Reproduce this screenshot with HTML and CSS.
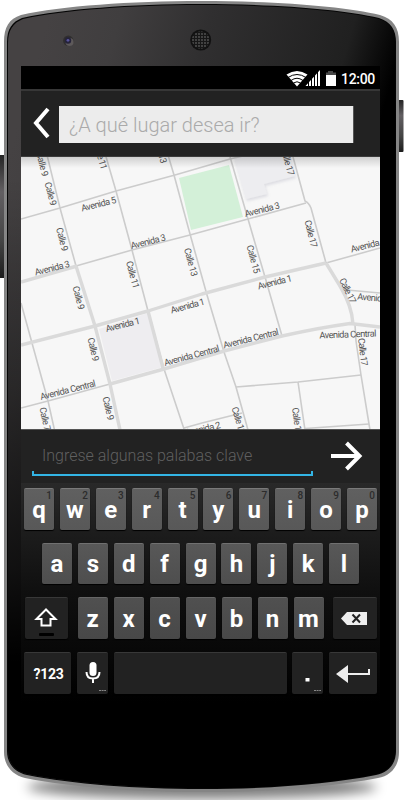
FILE: index.html
```
<!DOCTYPE html>
<html lang="es">
<head>
<meta charset="utf-8">
<title>¿A qué lugar desea ir?</title>
<link rel="stylesheet" href="styles.css">
</head>
<body>
<div class="phone">
  <svg class="phone-body" viewBox="0 0 404 800" aria-hidden="true">
    <defs>
      <linearGradient id="face" gradientUnits="userSpaceOnUse" x1="30" y1="80" x2="365" y2="175">
        <stop offset="0" stop-color="#454243"/><stop offset=".2" stop-color="#403e3f"/><stop offset=".45" stop-color="#302f30"/><stop offset=".85" stop-color="#202020"/><stop offset="1" stop-color="#000"/>
      </linearGradient>
      <linearGradient id="fade" x1="0" y1="0" x2="0" y2="1">
        <stop offset=".22" stop-color="#000" stop-opacity="0"/><stop offset=".5" stop-color="#000" stop-opacity=".38"/><stop offset=".72" stop-color="#000" stop-opacity=".7"/><stop offset=".84" stop-color="#000"/>
      </linearGradient>
      <linearGradient id="side" x1="0" y1="0" x2="0" y2="1">
        <stop offset="0" stop-color="#242424"/><stop offset=".3" stop-color="#625f62"/><stop offset=".7" stop-color="#444"/><stop offset="1" stop-color="#1c1c1c"/>
      </linearGradient>
      <filter id="soft" x="-20%" y="-80%" width="140%" height="260%"><feGaussianBlur stdDeviation="6"/></filter>
      <pattern id="grille" width="3" height="3" patternUnits="userSpaceOnUse"><rect width="3" height="3" fill="#171717"/><circle cx="1" cy="1" r=".9" fill="#555"/></pattern>
    </defs>
    <ellipse cx="202" cy="787" rx="175" ry="12" fill="#000" opacity=".5" filter="url(#soft)"/>
    <rect x="-2" y="155" width="7" height="123" rx="1" fill="url(#side)"/>
    <rect x="398" y="100" width="5.5" height="52" rx="1" fill="url(#side)"/>
    <path d="M4 42C4 27 9 19 21 15C62 6 130 1 201 1S345 6 380 15C393 19 399 27 399 42V752C399 767 390 776 378 778C330 787 270 792 202 792S72 787 25 778C12 775 4 765 4 752Z" fill="#858585"/>
    <path d="M7 42C7 29 12 22 22 18C64 9 130 4 201 4S342 9 379 18C391 22 396 30 396 42V751C396 764 388 773 376 775C330 784 270 789 202 789S74 784 27 775C14 772 7 763 7 751Z" fill="#050505"/>
    <path d="M8 43C8 30 13 23 23 19C65 10 130 5 201 5S342 10 379 19C391 23 395.500 31 395.500 43V750C395 763 387 772 376 774C330 783 270 788 202 788S74 783 27 774C14 771 8 762 8 750Z" fill="url(#face)"/>
    <path d="M8 43C8 30 13 23 23 19C65 10 130 5 201 5S342 10 379 19C391 23 395.500 31 395.500 43V750C395 763 387 772 376 774C330 783 270 788 202 788S74 783 27 774C14 771 8 762 8 750Z" fill="url(#fade)"/>
    <circle cx="68.300" cy="40.800" r="5.200" fill="#302e2e"/>
    <circle cx="69.500" cy="42" r="4" fill="#5d595a"/>
    <circle cx="68" cy="40.500" r="3.200" fill="#25233a"/>
    <circle cx="68" cy="40.300" r="1.400" fill="#58549c"/>
    <circle cx="200.700" cy="40" r="10.500" fill="#111"/>
    <circle cx="200.700" cy="40" r="8.800" fill="url(#grille)"/>
  </svg>

  <main class="screen">
    <div class="status">
      <svg class="status-icons" viewBox="286 70 51 17" aria-hidden="true">
        <path d="M286.500 74.500Q297 67.500 307.500 74.500L297 86.500Z" fill="#fff"/>
        <path d="M288 77.500Q297 71.500 306 77.500M291 80.500Q297 76 303 80.500M293.500 83Q297 80.500 300.500 83" fill="none" stroke="#000" stroke-width="1"/>
        <path d="M305.500 86L320 70V86Z" fill="#fff"/>
        <path d="M308.500 70V87M311.500 70V87M314.500 70V87M317.500 70V87" stroke="#000" stroke-width="1"/>
        <path d="M328 71H333V72.500H336V75H326V72.500H328Z" fill="#484848"/><path d="M326 75H336V86H326Z" fill="#fff"/>
      </svg>
      <span class="clock">12:00</span>
    </div>

    <header class="bar">
      <svg class="back" viewBox="0 0 18 32" aria-hidden="true"><path d="M15 2L3 16L15 30" fill="none" stroke="#fff" stroke-width="4"/></svg>
      <div class="search">¿A qué lugar desea ir?</div>
    </header>

    <svg class="map" viewBox="21 157 359 272">
      <defs>
        <linearGradient id="top" x1="0" y1="0" x2="0" y2="1"><stop offset="0" stop-opacity=".16"/><stop offset="1" stop-opacity="0"/></linearGradient>
        <filter id="lift" x="-20%" y="-20%" width="140%" height="150%"><feDropShadow dx="1" dy="2" stdDeviation="1.500" flood-color="#8888a0" flood-opacity=".25"/></filter>
      </defs>
      <rect x="21" y="157" width="359" height="272" fill="#f7f7f7"/>
      <path d="M179 178L229 165L243 217L191 230Z" fill="#d3f0d8"/>
      <path d="M234 155L235 161L246 199L267 194L264 184L295 176L289 155Z" fill="#ededf0" filter="url(#lift)"/>
      <path d="M99 329L148 313L163 367L112 381Z" fill="#eeedf0"/>
      <g class="road">
        <path d="M47 155L60 208L76 266"/>
        <path d="M105.500 155L116 191L132 250L148 311L164 369L184 429"/>
        <path d="M168 155L174 175L190 234L207 295L224 352L236 387L248 430"/>
        <path d="M229.500 155L248 219L265 277L282 336"/>
        <path d="M292.500 155L305 201Q309 203 311 208L326 263"/>
        <path d="M21 303L32 343L48 401L54.500 430"/>
        <path d="M21 219L60 208L116 191L175 175L230 159L247 155"/>
        <path d="M76 266L132 250L190 235L248 219L306 203"/>
        <path d="M326 263L380 248"/>
        <path d="M21 408L48 401L110 384"/>
        <path d="M355 325L356 341L361 375L369 424L370 430"/>
        <path d="M347 290L380 293"/>
        <path d="M236 387L298 382L361 375"/>
        <path d="M298 382L305 430"/>
        <path d="M305 428.500L369 424"/>
        <path d="M184 428L202 423L242 413"/>
      </g>
      <g class="road wide">
        <path d="M21 282L77 266"/>
        <path d="M76 266L95 326L110 384L120 430"/>
        <path d="M21 345L95 326L148 311L202 294L265 277L326 263"/>
        <path d="M148 311L163 368"/>
        <path d="M110 384L164 369L224 351L282 336Q318 328 350 323.500L380 327"/>
        <path d="M326 263L340 286Q352 306 353 324"/>
      </g>
      <g class="label">
        <text transform="translate(36 153) rotate(75)" textLength="25">Calle 9</text>
        <text transform="translate(44.500 183) rotate(75)" textLength="24">Calle 9</text>
        <text transform="translate(56 228.500) rotate(75)" textLength="24">Calle 9</text>
        <text transform="translate(72.500 287) rotate(75)" textLength="24">Calle 9</text>
        <text transform="translate(87.500 338.500) rotate(77)" textLength="24">Calle 9</text>
        <text transform="translate(102.500 397.500) rotate(77)" textLength="24">Calle 9</text>
        <text transform="translate(94 144) rotate(75)" textLength="27">Calle 11</text>
        <text transform="translate(126 262) rotate(75)" textLength="28">Calle 11</text>
        <text transform="translate(153.500 137) rotate(75)" textLength="28">Calle 13</text>
        <text transform="translate(184 249) rotate(75)" textLength="29">Calle 13</text>
        <text transform="translate(246.500 246) rotate(75)" textLength="29">Calle 15</text>
        <text transform="translate(281 149) rotate(75)" textLength="28">Calle 17</text>
        <text transform="translate(304.500 221) rotate(76)" textLength="28">Calle 17</text>
        <text transform="translate(339 280) rotate(64)" textLength="27">Calle 17</text>
        <text transform="translate(358 338.500) rotate(83)" textLength="28">Calle 17</text>
        <text transform="translate(39.500 408) rotate(78)" textLength="24">Calle 7</text>
        <text transform="translate(231.500 408) rotate(73)" textLength="28">Calle 13</text>
        <text transform="translate(292 408) rotate(82)" textLength="28">Calle 15</text>
        <text transform="translate(82 211.500) rotate(-14)" textLength="36">Avenida 5</text>
        <text transform="translate(35.500 275.500) rotate(-14)" textLength="36">Avenida 3</text>
        <text transform="translate(131.500 249) rotate(-14)" textLength="36">Avenida 3</text>
        <text transform="translate(245.500 217) rotate(-14)" textLength="36">Avenida 3</text>
        <text transform="translate(258.500 289.500) rotate(-14)" textLength="35">Avenida 1</text>
        <text transform="translate(351.500 252.500) rotate(-14)" textLength="36">Avenida 1</text>
        <text transform="translate(357 299.500) rotate(5)" textLength="36">Avenida 1</text>
        <text transform="translate(106.500 332) rotate(-14)" textLength="35">Avenida 1</text>
        <text transform="translate(171.500 313.500) rotate(-15)" textLength="35">Avenida 1</text>
        <text transform="translate(41 400) rotate(-14)" textLength="57">Avenida Central</text>
        <text transform="translate(165 366) rotate(-15)" textLength="57">Avenida Central</text>
        <text transform="translate(224 348.500) rotate(-14)" textLength="57">Avenida Central</text>
        <text transform="translate(319.500 338.500) rotate(-2)" textLength="57">Avenida Central</text>
        <text transform="translate(186 436) rotate(-13)" textLength="36">Avenida 2</text>
      </g>
      <rect x="21" y="157" width="359" height="11" fill="url(#top)"/>
    </svg>

    <section class="entry">
      <div class="field">Ingrese algunas palabas clave</div>
      <svg class="go" viewBox="0 0 32 30" aria-hidden="true"><path d="M0 15H28M15.500 2L28.500 15L15.500 28" fill="none" stroke="#fff" stroke-width="4"/></svg>
    </section>

    <section class="keyboard">
      <div class="keys top-row">
        <div class="key">q<sup>1</sup></div><div class="key">w<sup>2</sup></div><div class="key">e<sup>3</sup></div><div class="key">r<sup>4</sup></div><div class="key">t<sup>5</sup></div><div class="key">y<sup>6</sup></div><div class="key">u<sup>7</sup></div><div class="key">i<sup>8</sup></div><div class="key">o<sup>9</sup></div><div class="key">p<sup>0</sup></div>
      </div>
      <div class="keys home-row">
        <div class="key">a</div><div class="key">s</div><div class="key">d</div><div class="key">f</div><div class="key">g</div><div class="key">h</div><div class="key">j</div><div class="key">k</div><div class="key">l</div>
      </div>
      <div class="keys low-row">
        <div class="key dark shift"><svg viewBox="0 0 43 42" aria-hidden="true"><path d="M21 12.500L11.500 22H16.500V28.500H25.500V22H30.500Z" fill="none" stroke="#fff" stroke-width="2"/><rect x="14" y="36" width="15" height="3" rx="1" fill="#000"/></svg></div>
        <div class="letters"><div class="key">z</div><div class="key">x</div><div class="key">c</div><div class="key">v</div><div class="key">b</div><div class="key">n</div><div class="key">m</div></div>
        <div class="key dark erase"><svg viewBox="0 0 44 42" aria-hidden="true"><path d="M8 21.500L14 15H34V28H14Z" fill="#eee"/><path d="M19.500 17.500L27 25.500M27 17.500L19.500 25.500" stroke="#222" stroke-width="2"/></svg></div>
      </div>
      <div class="keys last-row">
        <div class="key dark symbols">?123</div>
        <div class="key dark small"><svg viewBox="0 0 31 42" aria-hidden="true"><rect x="12.500" y="10" width="7" height="14" rx="3.500" fill="#fff"/><path d="M9.500 20Q9.500 26.500 16 26.500T22.500 20M16 26.500V31" fill="none" stroke="#fff" stroke-width="2"/><path d="M22 38.500H29" stroke="#888" stroke-width="1" stroke-dasharray="2 .6"/></svg></div>
        <div class="key dark space"></div>
        <div class="key dark small"><svg viewBox="0 0 31 42" aria-hidden="true"><rect x="13.500" y="26" width="4" height="3.500" fill="#fff"/><path d="M22 38.500H29" stroke="#888" stroke-width="1" stroke-dasharray="2 .6"/></svg></div>
        <div class="key dark enter"><svg viewBox="0 0 48 42" aria-hidden="true"><path d="M7 22L19 13V31Z" fill="#eee"/><path d="M18 22H40V17" fill="none" stroke="#eee" stroke-width="2"/></svg></div>
      </div>
    </section>
  </main>
</div>
</body>
</html>
```
FILE: styles.css
```
* { box-sizing: border-box; }
body { margin: 0; background: #fff; font-family: Roboto, "Liberation Sans", sans-serif; }
.phone { position: relative; width: 404px; height: 800px; padding: 66px 24px 0 21px; overflow: hidden; }
.phone-body { position: absolute; inset: 0; width: 404px; height: 800px; }
.screen { position: relative; width: 359px; background: #000; }
.screen svg { display: block; }

.status { display: flex; justify-content: flex-end; height: 23px; padding: 4px 5px 0 0; background: #000; }
.status-icons { width: 51px; height: 17px; }
.clock { width: 35px; margin-left: 3px; color: #fff; font-size: 14px; font-weight: 500; line-height: 19px; letter-spacing: -.3px; text-align: right; white-space: nowrap; }

.bar { display: flex; height: 68px; padding: 15px 26px 0 12px; background: #222; border-top: 2px solid #373737; border-bottom: 1px solid #3b3b3b; }
.back { width: 18px; height: 32px; margin-top: 1px; }
.search { width: 295px; height: 37px; margin-left: 8px; padding-left: 10px; background: #ececec; border-right: 1px solid #555; color: #aaa; font-size: 20px; font-weight: 300; line-height: 38px; white-space: nowrap; }

.map { width: 359px; height: 272px; }
.road { fill: none; stroke: #ccc; stroke-width: 1.6; stroke-linejoin: round; }
.wide { stroke: #dadada; stroke-width: 3.4; }
.label { fill: #555; font-size: 9.3px; }

.entry { display: flex; height: 54px; padding: 12px 17px 0 11px; background: #222; border-top: 1px solid #555; }
.field { width: 281px; height: 34px; padding-left: 10px; color: #606060; font-size: 16px; font-weight: 300; line-height: 28px; white-space: nowrap;
  background: linear-gradient(#33b5e5, #33b5e5) 0 100% / 100% 2px no-repeat, linear-gradient(#33b5e5, #33b5e5) 0 100% / 2px 5px no-repeat, linear-gradient(#33b5e5, #33b5e5) 100% 100% / 2px 5px no-repeat; }
.go { width: 32px; height: 30px; margin-left: 18px; margin-top: -1px; }

.keyboard { display: flex; flex-direction: column; gap: 13px; height: 220px; padding: 5px 3px 0; background: linear-gradient(#292929, #1b1b1b 25%, #0f0f0f 50%, #080808 75%, #000); }
.keys { display: flex; flex-shrink: 0; justify-content: space-between; height: 42px; }
.keys.home-row { height: 41px; padding: 0 18px; }
.low-row { padding-left: 1px; }
.letters { display: flex; justify-content: space-between; width: 246px; }
.key { position: relative; display: flex; align-items: center; justify-content: center; width: 30px; background: linear-gradient(#606060, #585858); border-radius: 2px; border-top: 1px solid #7a7a7a; box-shadow: 0 1px 1px #000; color: #fff; font-size: 24px; font-weight: 700; line-height: 1; }
.home-row .key { background: linear-gradient(#585858, #4e4e4e); border-color: #707070; }
.letters .key { background: linear-gradient(#505050, #484848); border-color: #666; }
.key sup { position: absolute; top: 1px; right: 2px; color: #2c2c2c; font-size: 10px; font-weight: 500; line-height: 11px; }
.keys .dark { background: #222; border-color: #383838; }
.dark svg { width: 100%; height: 42px; margin-top: -1px; }
.shift { width: 43px; }
.erase { width: 44px; }
.keys .symbols { width: 47px; padding-left: 2px; font-size: 14px; letter-spacing: -.3px; }
.small { width: 31px; }
.space { width: 173px; }
.enter { width: 48px; }
```
